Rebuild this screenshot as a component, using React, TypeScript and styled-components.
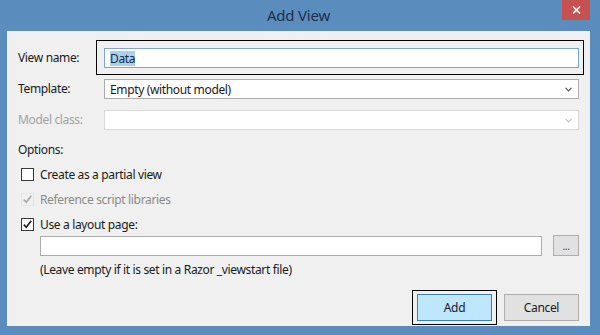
import React from 'react'
import styled, { createGlobalStyle } from 'styled-components'

const GlobalStyle = createGlobalStyle`
  html, body {
    margin: 0;
    padding: 0;
  }
  body {
    width: 600px;
    height: 335px;
    overflow: hidden;
    font-family: 'Noto Sans', 'Open Sans', sans-serif;
    font-size: 12px;
    letter-spacing: -0.35px;
    color: #1a1a1a;
  }
`

const Window = styled.div`
  width: 600px;
  height: 335px;
  box-sizing: border-box;
  background: #5a8dbe;
  display: flex;
  flex-direction: column;
  padding: 0 10px 9px 7px;
`

const TitleBar = styled.div`
  height: 31px;
  display: grid;
  grid-template-columns: 1fr auto 1fr;
  align-items: start;
`

const Title = styled.div`
  grid-column: 2;
  line-height: 31px;
  font-size: 15px;
  letter-spacing: -0.2px;
  color: #1c2f46;
`

const CloseButton = styled.div`
  grid-column: 3;
  justify-self: end;
  width: 28px;
  height: 20px;
  background: #c75050;
  display: flex;
  align-items: center;
  justify-content: center;
`

const Panel = styled.div`
  flex: 1;
  background: #f0f0f0;
  padding: 17px 11px 1px 11px;
  display: flex;
  flex-direction: column;
`

const FormGrid = styled.div`
  display: grid;
  grid-template-columns: 86px 1fr;
  row-gap: 11px;
  align-items: center;
`

const Label = styled.div<{ $disabled?: boolean }>`
  line-height: 16px;
  color: ${p => (p.$disabled ? '#a2a2a2' : '#1a1a1a')};
`

const FocusRing = styled.div`
  border: 1px solid #000;
  padding: 7px 4px 6px 7px;
  margin: -8px -5px -7px -8px;
`

const TextBox = styled.div<{ $focused?: boolean }>`
  flex: 1;
  height: 20px;
  box-sizing: border-box;
  border: 1px solid ${p => (p.$focused ? '#7fa4cf' : '#acacac')};
  background: #fff;
  padding: 0 5px;
  display: flex;
  align-items: center;
`

const Selected = styled.span`
  background: #a9d0f3;
  color: #1d2a3a;
  line-height: 15px;
`

const Select = styled.div<{ $disabled?: boolean }>`
  height: 20px;
  box-sizing: border-box;
  border: 1px solid ${p => (p.$disabled ? '#d9d9d9' : '#acacac')};
  background: #fff;
  padding: 0 6px 0 5px;
  display: flex;
  align-items: center;
  justify-content: space-between;
`

const OptionsLabel = styled.div`
  margin-top: 12px;
  line-height: 16px;
`

const CheckRow = styled.div<{ $disabled?: boolean; $top: number }>`
  display: flex;
  align-items: center;
  gap: 6px;
  height: 16px;
  margin: ${p => p.$top}px 0 0 3px;
  color: ${p => (p.$disabled ? '#8a8a8a' : '#1a1a1a')};
`

const Box = styled.div<{ $disabled?: boolean }>`
  width: 13px;
  height: 13px;
  box-sizing: border-box;
  border: 1px solid ${p => (p.$disabled ? '#e6e6e6' : '#3a3a3a')};
  background: ${p => (p.$disabled ? '#f0f0f0' : '#fff')};
  display: flex;
  align-items: center;
  justify-content: center;
`

const PathRow = styled.div`
  display: flex;
  align-items: flex-end;
  gap: 11px;
  height: 21px;
  margin: 3px 0 0 22px;
`

const GreyButton = styled.div<{ $width: number; $height: number }>`
  width: ${p => p.$width}px;
  height: ${p => p.$height}px;
  box-sizing: border-box;
  border: 1px solid #adadad;
  background: #e1e1e1;
  display: flex;
  align-items: center;
  justify-content: center;
`

const Dots = styled.span`
  font-size: 10px;
  color: #444;
  margin-top: 1px;
`

const Hint = styled.div`
  margin: 6px 0 0 22px;
  line-height: 16px;
`

const ButtonRow = styled.div`
  display: flex;
  justify-content: flex-end;
  align-items: center;
  gap: 7px;
  margin-top: 12px;
`

const ButtonFocus = styled.div`
  border: 1px solid #000;
  padding: 3px 4px;
`

const PrimaryButton = styled.div`
  width: 75px;
  height: 27px;
  box-sizing: border-box;
  border: 1px solid #3c7fb1;
  background: #bee6fd;
  display: flex;
  align-items: center;
  justify-content: center;
`

const Chevron = ({ color }: { color: string }) => (
  <svg width='7' height='5' viewBox='0 0 7 5'>
    <polyline points='0.5,0.8 3.5,3.8 6.5,0.8' fill='none' stroke={color} strokeWidth='1.2' />
  </svg>
)

const Check = ({ color }: { color: string }) => (
  <svg width='11' height='11' viewBox='0 0 11 11'>
    <path d='M1.8 5.6 L4.3 8.3 L9.2 1.8' fill='none' stroke={color} strokeWidth='1.7' />
  </svg>
)

export default function App() {
  return (
    <Window>
      <GlobalStyle />
      <TitleBar>
        <Title>Add View</Title>
        <CloseButton>
          <svg width='9' height='8' viewBox='0 0 9 8'>
            <path d='M1 0.5 L8 7.5 M8 0.5 L1 7.5' stroke='#fff' strokeWidth='1.6' />
          </svg>
        </CloseButton>
      </TitleBar>
      <Panel>
        <FormGrid>
          <Label>View name:</Label>
          <FocusRing>
            <TextBox $focused>
              <Selected>Data</Selected>
            </TextBox>
          </FocusRing>
          <Label>Template:</Label>
          <Select>
            <span>Empty (without model)</span>
            <Chevron color='#555' />
          </Select>
          <Label $disabled>Model class:</Label>
          <Select $disabled>
            <span />
            <Chevron color='#c2c2c2' />
          </Select>
        </FormGrid>

        <OptionsLabel>Options:</OptionsLabel>
        <CheckRow $top={8}>
          <Box />
          Create as a partial view
        </CheckRow>
        <CheckRow $top={9} $disabled>
          <Box $disabled>
            <Check color='#a8a8a8' />
          </Box>
          Reference script libraries
        </CheckRow>
        <CheckRow $top={9}>
          <Box>
            <Check color='#222' />
          </Box>
          Use a layout page:
        </CheckRow>

        <PathRow>
          <TextBox />
          <GreyButton $width={26} $height={21}>
            <Dots>...</Dots>
          </GreyButton>
        </PathRow>
        <Hint>(Leave empty if it is set in a Razor _viewstart file)</Hint>

        <ButtonRow>
          <ButtonFocus>
            <PrimaryButton>Add</PrimaryButton>
          </ButtonFocus>
          <GreyButton $width={75} $height={27}>Cancel</GreyButton>
        </ButtonRow>
      </Panel>
    </Window>
  )
}
